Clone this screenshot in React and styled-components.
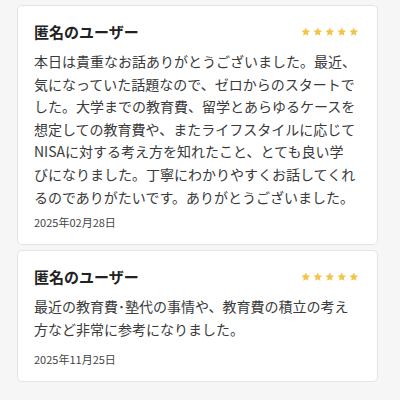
import React from 'react';
import styled, {createGlobalStyle} from 'styled-components';

const GlobalStyle = createGlobalStyle`
  body {
    margin: 0;
    background: #f6f6f6;
    font-family: "Noto Sans CJK JP", "Noto Sans", sans-serif;
    color: #333;
  }
`;

const ReviewList = styled.div`
  display: flex;
  flex-direction: column;
  gap: 5px;
  padding: 5px 22px 0 17px;
`;

const ReviewCard = styled.div`
  background: #fff;
  border: 1px solid #e4e4e4;
  border-radius: 5px;
  padding: 15px 19px ${props => props.$bottom || 13}px 16px;
`;

const ReviewHeader = styled.div`
  display: flex;
  justify-content: space-between;
  align-items: center;
  height: 20px;
  margin-bottom: 9px;
`;

const ReviewerName = styled.div`
  font-size: 15px;
  font-weight: 700;
  color: #222;
`;

const Stars = styled.div`
  display: flex;
  gap: 2.4px;
  margin-top: 2px;
`;

const ReviewBody = styled.p`
  margin: 0;
  max-width: 323px;
  font-size: 14px;
  line-height: 22.6px;
  color: #3a3a3a;
`;

const ReviewDate = styled.div`
  margin-top: ${props => props.$gap || 6}px;
  font-size: 11px;
  line-height: 16px;
  color: #444;
`;

function Star() {
    return (
        <svg width="9.5" height="9.5" viewBox="0 0 24 24">
            <path fill="#f2c44a"
                  d="M12 1.5l3.2 7 7.6.8-5.7 5.1 1.6 7.5L12 18l-6.7 3.9 1.6-7.5L1.2 9.3l7.6-.8z"/>
        </svg>
    );
}

function Review({name, text, date, dateGap, bottom}) {
    return (
        <ReviewCard $bottom={bottom}>
            <ReviewHeader>
                <ReviewerName>{name}</ReviewerName>
                <Stars>
                    {[0, 1, 2, 3, 4].map(i => <Star key={i}/>)}
                </Stars>
            </ReviewHeader>
            <ReviewBody>{text}</ReviewBody>
            <ReviewDate $gap={dateGap}>{date}</ReviewDate>
        </ReviewCard>
    );
}

export default function App() {
    return (
        <>
            <GlobalStyle/>
            <ReviewList>
                <Review name="匿名のユーザー"
                        text="本日は貴重なお話ありがとうございました。最近、気になっていた話題なので、ゼロからのスタートでした。大学までの教育費、留学とあらゆるケースを想定しての教育費や、またライフスタイルに応じてNISAに対する考え方を知れたこと、とても良い学びになりました。丁寧にわかりやすくお話してくれるのでありがたいです。ありがとうございました。"
                        date="2025年02月28日"
                        dateGap={6}
                        bottom={14}/>
                <Review name="匿名のユーザー"
                        text="最近の教育費･塾代の事情や、教育費の積立の考え方など非常に参考になりました。"
                        date="2025年11月25日"
                        dateGap={11}
                        bottom={14}/>
            </ReviewList>
        </>
    );
}
